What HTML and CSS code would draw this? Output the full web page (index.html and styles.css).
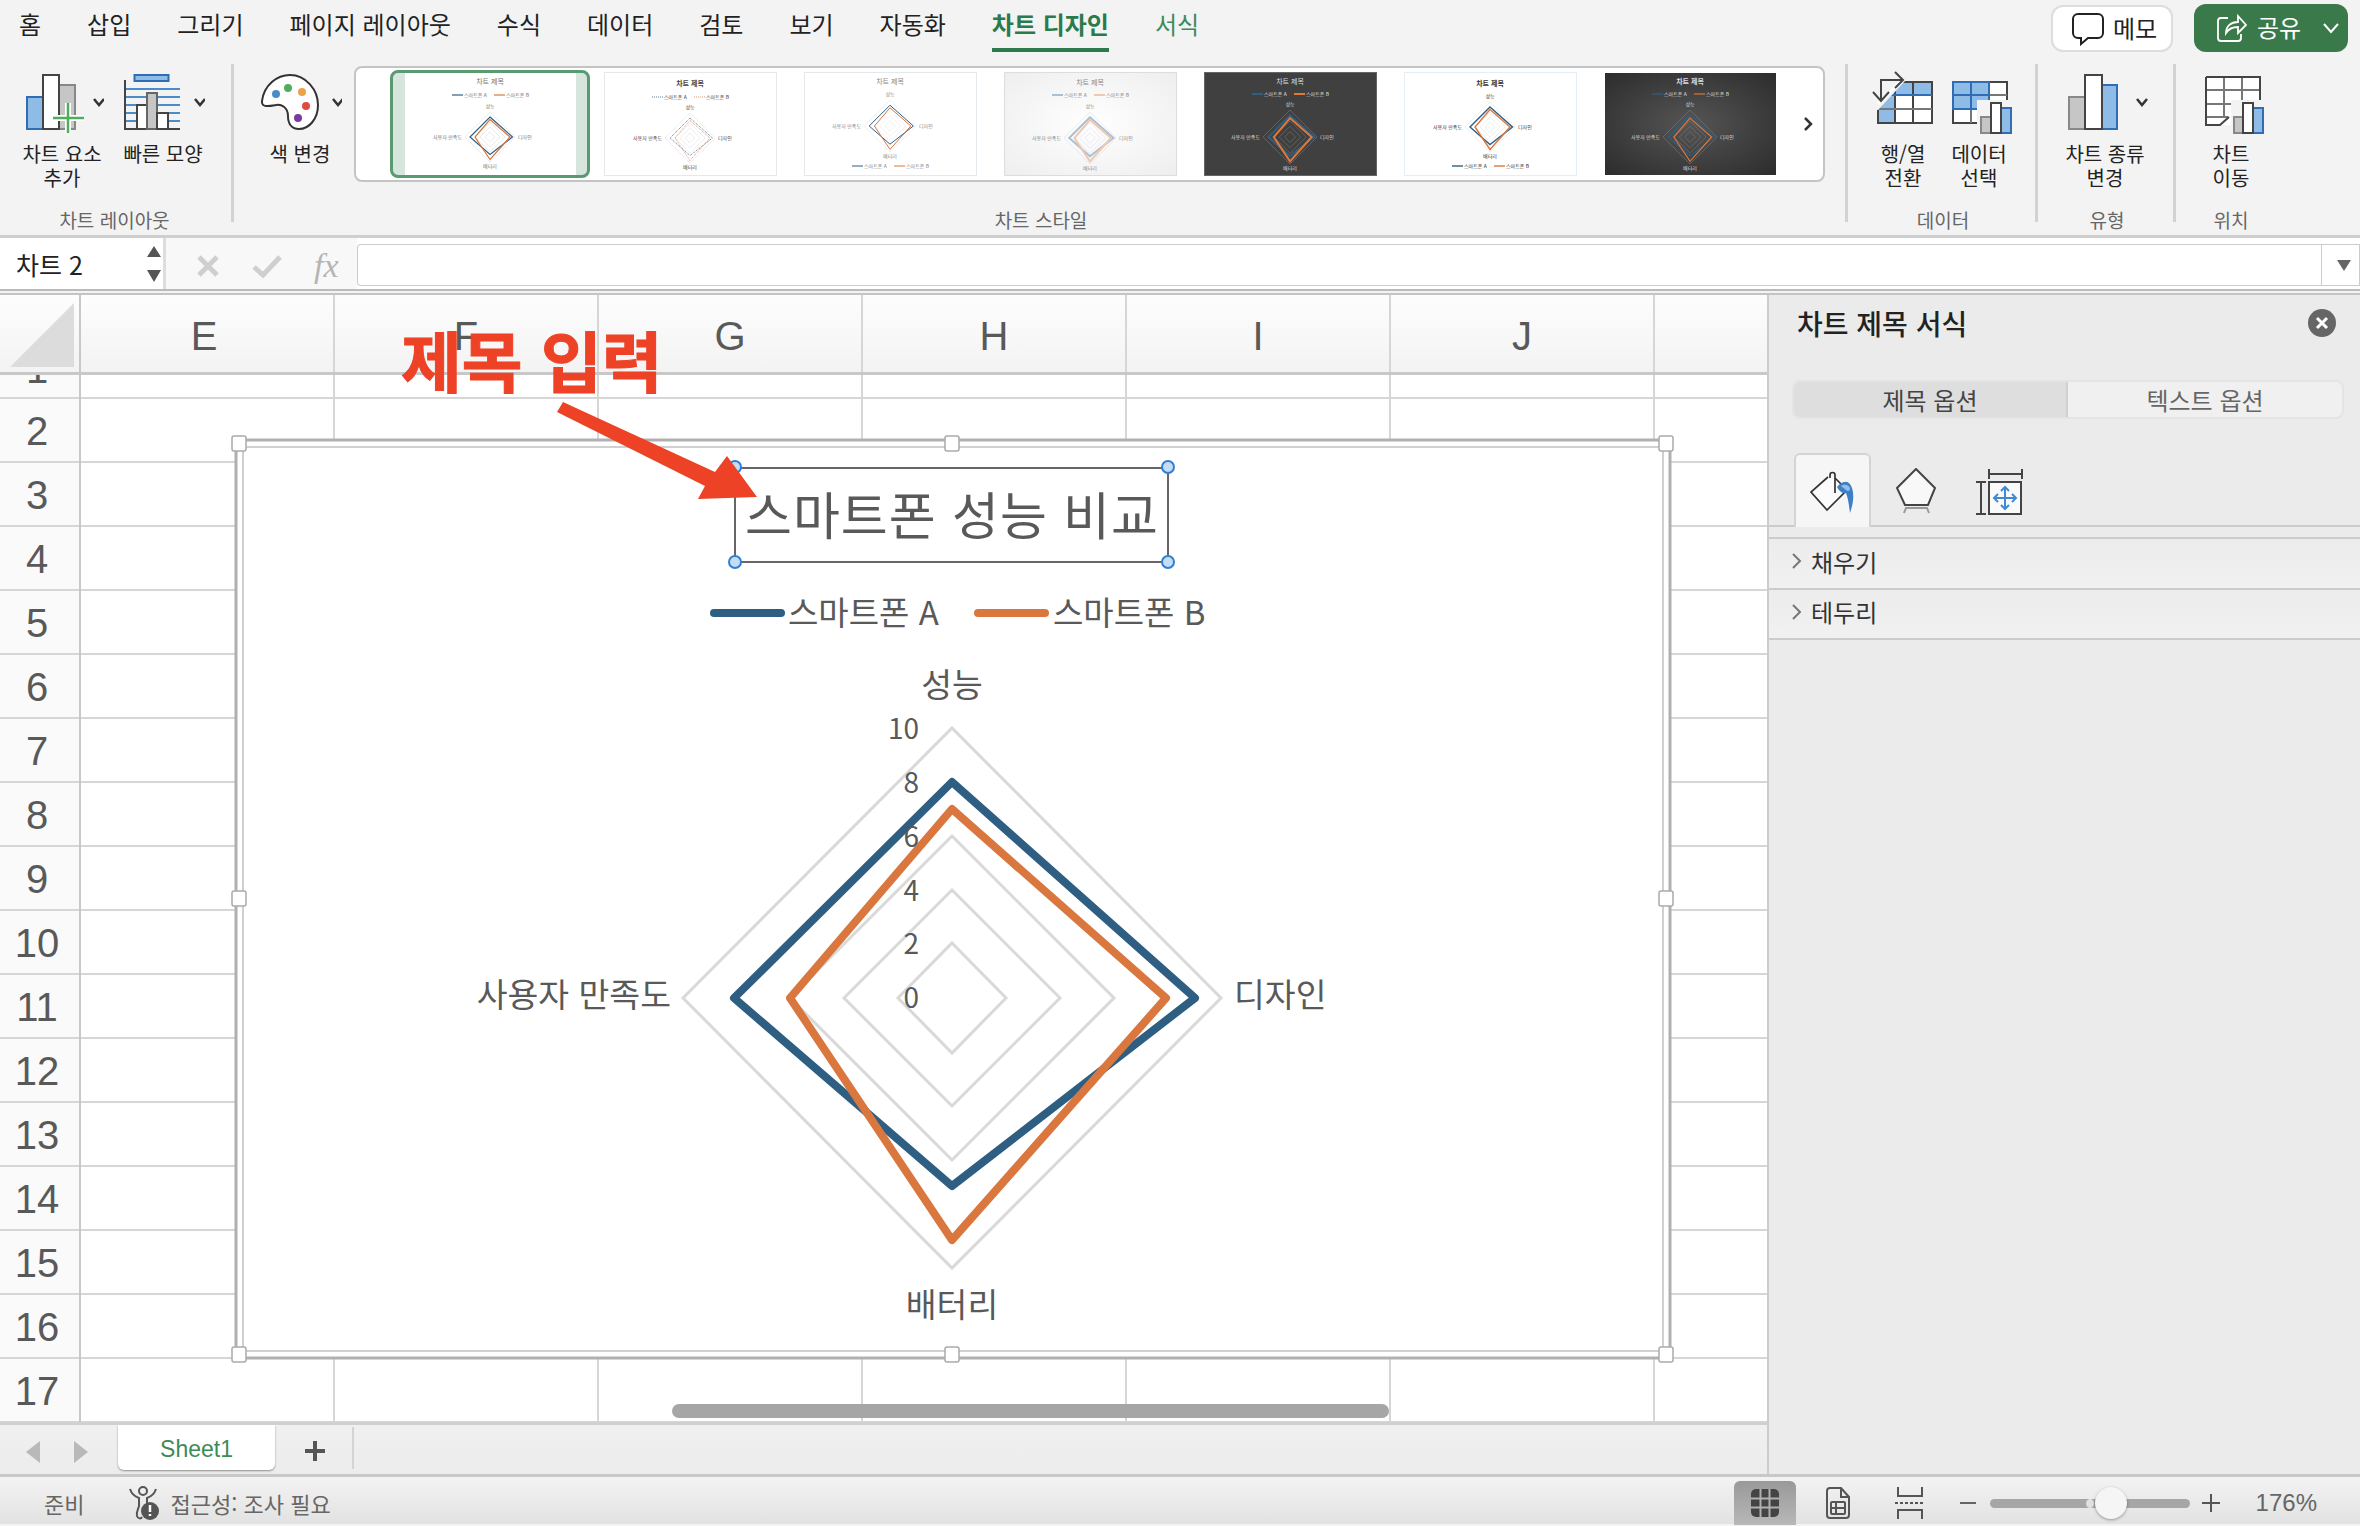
FILE: index.html
```html
<!DOCTYPE html>
<html lang="ko">
<head>
    <meta charset="UTF-8">
    <title>차트 디자인 - Excel</title>
    <link rel="stylesheet" href="styles.css">
</head>
<body>
    <!-- Tab bar -->
    <header class="tabbar">
        <ul class="tabs">
            <li>홈</li>
            <li>삽입</li>
            <li>그리기</li>
            <li>페이지 레이아웃</li>
            <li>수식</li>
            <li>데이터</li>
            <li>검토</li>
            <li>보기</li>
            <li>자동화</li>
            <li class="tab-active">차트 디자인</li>
            <li class="tab-green">서식</li>
        </ul>
        <div class="top-actions">
            <button class="memo-btn">
                <svg width="34" height="34" viewBox="0 0 34 34"><path d="M7 2h20a5 5 0 0 1 5 5v14a5 5 0 0 1-5 5H17l-7 6v-6H7a5 5 0 0 1-5-5V7a5 5 0 0 1 5-5z" fill="none" stroke="#222" stroke-width="2"/></svg>
                <span class="btn-text">메모</span>
            </button>
            <button class="share-btn">
                <svg width="32" height="32" viewBox="0 0 32 32" fill="none" stroke="#fff" stroke-width="1.8"><path d="M13 6H6a3 3 0 0 0-3 3v17a3 3 0 0 0 3 3h17a3 3 0 0 0 3-3v-4"/><path d="M11 21c0-7 5-11 12-11V4l8 9-8 8v-6c-5 0-9 1-12 6z"/></svg>
                <span class="btn-text">공유</span>
                <svg class="share-chev" width="18" height="12" viewBox="0 0 18 12" fill="none" stroke="#fff" stroke-width="2"><path d="M2 2l7 8 7-8"/></svg>
            </button>
        </div>
    </header>

    <!-- Ribbon -->
    <section class="ribbon">
        <div class="group group-layout">
            <div class="group-items">
                <div class="rb rb-84">
                    <svg width="84" height="68" viewBox="20 68 84 68">
                        <rect x="27" y="97" width="16" height="32" fill="#8fbce6" stroke="#2f6db5" stroke-width="2"/>
                        <rect x="59" y="85" width="16" height="44" fill="#c6c6c6" stroke="#888" stroke-width="2"/>
                        <rect x="43" y="75" width="16" height="54" fill="#fff" stroke="#444" stroke-width="2"/>
                        <path d="M53 118h31M68 103v30" stroke="#fff" stroke-width="6"/>
                        <path d="M53 118h31M68 103v30" stroke="#4fae5e" stroke-width="2.5"/>
                        <path class="chev" d="M95 99l5 6 5-6" transform="translate(-1 0)"/>
                    </svg>
                    <span>차트 요소<br>추가</span>
                </div>
                <div class="rb rb-84">
                    <svg width="84" height="68" viewBox="121 68 84 68">
                        <path d="M125 89h55M125 97h55M125 105h55M125 113h55M125 121h55" stroke="#4a8cc9" stroke-width="2"/>
                        <rect x="134.500" y="75" width="34" height="6" fill="#8fbce6" stroke="#2f6db5" stroke-width="2"/>
                        <path d="M125 80v49h55" fill="none" stroke="#444" stroke-width="2"/>
                        <rect x="137" y="105" width="10" height="24" fill="#fff" stroke="#444" stroke-width="2"/>
                        <rect x="147" y="93" width="10" height="36" fill="#c6c6c6" stroke="#666" stroke-width="2"/>
                        <rect x="157" y="113" width="11" height="16" fill="#fff" stroke="#444" stroke-width="2"/>
                        <path class="chev" d="M195 99l5 6 5-6"/>
                    </svg>
                    <span>빠른 모양</span>
                </div>
            </div>
            <div class="group-label">차트 레이아웃</div>
        </div>

        <div class="group group-style">
            <div class="group-items">
                <div class="rb rb-84">
                    <svg width="84" height="68" viewBox="258 68 84 68">
                        <path d="M262 101C264 85 277 75 290 75C306 75 318 90 318 105C318 119 309 129 299 129C291 129 288 123 288 116C288 107 281 104 276 105C270 106 261 108 262 101Z" fill="#fff" stroke="#333" stroke-width="2"/>
                        <circle cx="276" cy="94" r="4" fill="#4a8cc9"/>
                        <circle cx="288" cy="88" r="4" fill="#4fae5e"/>
                        <circle cx="302" cy="92" r="4" fill="#eea04a"/>
                        <circle cx="306" cy="106" r="4" fill="#e04b3f"/>
                        <circle cx="298" cy="118" r="4" fill="#7b3a9e"/>
                        <path class="chev" d="M333 99l5 6 5-6"/>
                    </svg>
                    <span>색 변경</span>
                </div>
                <div class="gallery">
                    <div class="thumbs" id="thumbs"></div>
                    <svg class="gallery-next" width="12" height="16" viewBox="0 0 12 16"><path d="M2 2l6 6-6 6" fill="none" stroke="#333" stroke-width="2.500"/></svg>
                </div>
            </div>
            <div class="group-label">차트 스타일</div>
        </div>

        <div class="group group-data">
            <div class="group-items">
                <div class="rb rb-76">
                    <svg width="76" height="68" viewBox="1865 68 76 68">
                        <rect x="1878" y="82" width="54" height="41" fill="#fff"/>
                        <path d="M1878 82h54v13h-54zM1878 95h17v28h-17z" fill="#8fbce6"/>
                        <path d="M1878 82h54v41h-54zM1895 82v41M1913 82v41" fill="none" stroke="#444" stroke-width="2"/>
                        <path d="M1878 95h54" stroke="#2f6db5" stroke-width="2"/>
                        <path d="M1878 109h54" stroke="#777" stroke-width="2"/>
                        <path d="M1870 68h36v12l-28 30h-8z" fill="#f3f3f3"/>
                        <path d="M1900 82l-22 22" stroke="#fff" stroke-width="3"/>
                        <path d="M1902 80h-21v20M1895 72l8 8-8 8M1873 92l8 9 8-9" fill="none" stroke="#444" stroke-width="2"/>
                    </svg>
                    <span>행/열<br>전환</span>
                </div>
                <div class="rb rb-76">
                    <svg width="76" height="68" viewBox="1941 68 76 68">
                        <rect x="1953" y="82" width="54" height="41" fill="#fff" stroke="#444" stroke-width="2"/>
                        <path d="M1953 82h36v28h-36z" fill="#8fbce6"/>
                        <path d="M1971 82v41M1989 82v41M1953 109h54M1953 95h54" stroke="#777" stroke-width="2"/>
                        <path d="M1953 82h36v27h-36zM1953 95h36M1971 82v27" fill="none" stroke="#2f6db5" stroke-width="2"/>
                        <rect x="1977" y="100" width="38" height="36" fill="#f3f3f3"/>
                        <rect x="1981" y="117" width="10" height="16" fill="#c6c6c6" stroke="#888" stroke-width="2"/>
                        <rect x="2001" y="108" width="10" height="25" fill="#8fbce6" stroke="#2f6db5" stroke-width="2"/>
                        <rect x="1991" y="103" width="10" height="30" fill="#fff" stroke="#444" stroke-width="2"/>
                    </svg>
                    <span>데이터<br>선택</span>
                </div>
            </div>
            <div class="group-label">데이터</div>
        </div>

        <div class="group group-type">
            <div class="group-items">
                <div class="rb rb-100">
                    <svg width="100" height="68" viewBox="2055 68 100 68">
                        <rect x="2069" y="97" width="16" height="32" fill="#c6c6c6" stroke="#888" stroke-width="2"/>
                        <rect x="2102" y="85" width="15" height="44" fill="#8fbce6" stroke="#2f6db5" stroke-width="2"/>
                        <rect x="2085" y="75" width="17" height="54" fill="#fff" stroke="#444" stroke-width="2"/>
                        <path class="chev" d="M2137 99l5 6 5-6"/>
                    </svg>
                    <span>차트 종류<br>변경</span>
                </div>
            </div>
            <div class="group-label">유형</div>
        </div>

        <div class="group group-place">
            <div class="group-items">
                <div class="rb rb-110">
                    <svg width="110" height="68" viewBox="2176 68 110 68">
                        <path d="M2206 77h54v48h-32l-8 0h-14z" fill="#fff"/>
                        <path d="M2206 90h54M2206 104h54M2206 117h22M2224 77v40M2242 77v40" stroke="#777" stroke-width="2" fill="none"/>
                        <path d="M2206 77h54v38M2206 77v48h14l9-8" fill="none" stroke="#444" stroke-width="2"/>
                        <rect x="2231" y="100" width="36" height="36" fill="#f3f3f3"/>
                        <rect x="2234" y="117" width="9" height="16" fill="#c6c6c6" stroke="#888" stroke-width="2"/>
                        <rect x="2253" y="108" width="10" height="25" fill="#8fbce6" stroke="#2f6db5" stroke-width="2"/>
                        <rect x="2243" y="103" width="10" height="30" fill="#fff" stroke="#444" stroke-width="2"/>
                    </svg>
                    <span>차트<br>이동</span>
                </div>
            </div>
            <div class="group-label">위치</div>
        </div>
    </section>

    <!-- Formula bar -->
    <section class="formula-bar">
        <div class="name-box">
            <span>차트 2</span>
            <svg width="16" height="36" viewBox="0 0 16 36"><path d="M8 0l7 11H1zM8 36l7-12H1z" fill="#555"/></svg>
        </div>
        <div class="formula-tools">
            <svg width="24" height="24" viewBox="0 0 24 24"><path d="M3 3l18 18M21 3L3 21" stroke="#cfcfcf" stroke-width="5"/></svg>
            <svg width="30" height="24" viewBox="0 0 30 24"><path d="M2 13l9 8L28 3" fill="none" stroke="#cfcfcf" stroke-width="5"/></svg>
            <span class="fx">fx</span>
        </div>
        <div class="formula-input"></div>
        <div class="formula-drop"><svg width="14" height="11" viewBox="0 0 14 11"><path d="M0 0h14L7 11z" fill="#666"/></svg></div>
    </section>

    <main class="workspace">
        <div class="sheet">
            <div class="col-head">
                <div class="corner"><svg width="64" height="64" viewBox="0 0 64 64"><path d="M0 64L64 0v64z" fill="#dcdcdc"/></svg></div>
                <div class="col col-e">E</div>
                <div class="col">F</div>
                <div class="col">G</div>
                <div class="col">H</div>
                <div class="col">I</div>
                <div class="col">J</div>
                <div class="col col-k"></div>
            </div>
            <div class="sheet-body">
                <div class="row-head">
                    <div class="row-first">1</div>
                    <div>2</div><div>3</div><div>4</div><div>5</div><div>6</div><div>7</div><div>8</div><div>9</div>
                    <div>10</div><div>11</div><div>12</div><div>13</div><div>14</div><div>15</div><div>16</div><div>17</div>
                </div>
                <div class="cells"></div>

                <!-- Chart object, coordinates follow the sheet pixels -->
                <svg class="chart" width="1450" height="934" viewBox="228 433 1450 934">
                    <rect x="236" y="440" width="1434" height="918" fill="#fff" stroke="#b0b0b0" stroke-width="3"/>
                    <rect x="243" y="447" width="1420" height="904" fill="#fff" stroke="#d0d0d0" stroke-width="2"/>

                    <g class="handles">
                        <rect x="232" y="436" width="14" height="15" rx="2"/>
                        <rect x="945" y="436" width="14" height="15" rx="2"/>
                        <rect x="1659" y="436" width="14" height="15" rx="2"/>
                        <rect x="232" y="891" width="14" height="15" rx="2"/>
                        <rect x="1659" y="891" width="14" height="15" rx="2"/>
                        <rect x="232" y="1347" width="14" height="15" rx="2"/>
                        <rect x="945" y="1347" width="14" height="15" rx="2"/>
                        <rect x="1659" y="1347" width="14" height="15" rx="2"/>
                    </g>

                    <rect x="735" y="468" width="433" height="94" fill="#fff" stroke="#666" stroke-width="2"/>
                    <text class="chart-title" x="952" y="535">스마트폰 성능 비교</text>
                    <g class="title-handles">
                        <circle cx="735" cy="467" r="6"/>
                        <circle cx="1168" cy="467" r="6"/>
                        <circle cx="735" cy="562" r="6"/>
                        <circle cx="1168" cy="562" r="6"/>
                    </g>

                    <path d="M714 613h67" stroke="#2e5f83" stroke-width="8" stroke-linecap="round"/>
                    <text class="legend" x="788" y="625">스마트폰 A</text>
                    <path d="M978 613h67" stroke="#d9773f" stroke-width="8" stroke-linecap="round"/>
                    <text class="legend" x="1053" y="625">스마트폰 B</text>

                    <g class="rings">
                        <path d="M952 943l54 55-54 55-54-55z"/>
                        <path d="M952 890l108 108-108 108-108-108z"/>
                        <path d="M952 836l162 162-162 162-162-162z"/>
                        <path d="M952 728l269 270-269 270-269-270z"/>
                    </g>
                    <path class="series" d="M952 782L1195 998L952 1186L734 998Z" stroke="#2e5f83"/>
                    <path class="series" d="M952 809L1166 998L952 1240L790 998Z" stroke="#d9773f"/>

                    <g class="scale">
                        <text x="919" y="739">10</text>
                        <text x="919" y="793">8</text>
                        <text x="919" y="847">6</text>
                        <text x="919" y="901">4</text>
                        <text x="919" y="954">2</text>
                        <text x="919" y="1008">0</text>
                    </g>
                    <g class="axis">
                        <text x="952" y="697" text-anchor="middle">성능</text>
                        <text x="1234" y="1007">디자인</text>
                        <text x="671" y="1007" text-anchor="end">사용자 만족도</text>
                        <text x="952" y="1317" text-anchor="middle">배터리</text>
                    </g>
                </svg>

                <div class="h-scroll"></div>
            </div>

            <!-- Annotation pasted over the sheet -->
            <svg class="note" width="400" height="210" viewBox="390 310 400 210">
                <text x="401" y="387">제목 입력</text>
                <path d="M563 402L557 412L705 486L698 499L757 497L727 456L715 472Z" fill="#ee4227"/>
            </svg>

            <div class="sheet-tabs">
                <svg class="sheet-arrows" width="62" height="22" viewBox="0 0 62 22"><path d="M14 0v22L0 11zM48 0v22l14-11z" fill="#b9b9b9"/></svg>
                <div class="sheet-tab">Sheet1</div>
                <svg class="sheet-add" width="22" height="22" viewBox="0 0 22 22"><path d="M11 1v20M1 11h20" stroke="#555" stroke-width="4"/></svg>
                <div class="sheet-sep"></div>
            </div>
        </div>

        <!-- Format pane -->
        <aside class="pane">
            <div class="pane-head">
                <h2>차트 제목 서식</h2>
                <svg width="28" height="28" viewBox="0 0 28 28"><circle cx="14" cy="14" r="14" fill="#666"/><path d="M9 9l10 10M19 9L9 19" stroke="#fff" stroke-width="3"/></svg>
            </div>
            <div class="segments">
                <div class="seg seg-on">제목 옵션</div>
                <div class="seg">텍스트 옵션</div>
            </div>
            <div class="pane-icons">
                <div class="icon-tab icon-tab-on">
                    <svg width="48" height="46" viewBox="1810 470 48 46">
                        <path d="M1829 477L1812 492L1828 510L1848 490L1836 478" fill="#fbfbfb" stroke="#333" stroke-width="1.700"/>
                        <path d="M1831 478V475a2.500 2.500 0 0 1 5 0V493" fill="none" stroke="#333" stroke-width="1.700"/>
                        <path d="M1838 487C1841 483 1846 480 1850 483C1856 489 1855 502 1851 513C1850 505 1849 498 1847 493C1844 494 1840 491 1838 487Z" fill="#3f7fc7"/>
                        <path d="M1842 486C1845 484 1849 484 1851 488C1851 491 1849 492 1847 490Z" fill="#93bfe8"/>
                    </svg>
                </div>
                <div class="icon-tab icon-tab-wide">
                    <svg width="44" height="46" viewBox="1894 470 44 46">
                        <path d="M1916 471L1935 490L1928 507H1905L1897 490Z" fill="#f8f8f8" stroke="#444" stroke-width="2"/>
                        <path d="M1904 515L1906 510H1927L1929 515" fill="none" stroke="#999" stroke-width="2"/>
                    </svg>
                </div>
                <div class="icon-tab">
                    <svg width="50" height="48" viewBox="1975 467 50 48">
                        <rect x="1989" y="481" width="32" height="32" fill="#fafafa" stroke="#444" stroke-width="2"/>
                        <path d="M1989 468v10M1989 473h33M2022 468v10M1976 481h10M1981 481v32M1976 513h10" fill="none" stroke="#444" stroke-width="2"/>
                        <path d="M2005 486v22M1994 497h22M2001 490l4-4 4 4M2001 504l4 4 4-4M1998 493l-4 4 4 4M2012 493l4 4-4 4" fill="none" stroke="#3f8ad0" stroke-width="2"/>
                    </svg>
                </div>
            </div>
            <div class="pane-sections">
                <div class="section">
                    <svg width="12" height="18" viewBox="0 0 12 18"><path d="M2 2l7 7-7 7" fill="none" stroke="#777" stroke-width="2"/></svg>
                    채우기
                </div>
                <div class="section">
                    <svg width="12" height="18" viewBox="0 0 12 18"><path d="M2 2l7 7-7 7" fill="none" stroke="#777" stroke-width="2"/></svg>
                    테두리
                </div>
            </div>
        </aside>
    </main>

    <!-- Status bar -->
    <footer class="statusbar">
        <span class="status-ready">준비</span>
        <svg class="status-a11y" width="32" height="36" viewBox="0 0 32 36" fill="none" stroke="#555" stroke-width="2">
            <circle cx="15" cy="6" r="4"/>
            <path d="M2 4c2 6 6 8 9 9v8c-1 4-3 6-2 10 1 3 4 3 5 1M28 4c-2 6-6 8-9 9v7"/>
            <circle cx="22" cy="26" r="9" fill="#555" stroke="none"/>
            <path d="M22 20v7M22 29v2" stroke="#fff" stroke-width="2.500"/>
        </svg>
        <span class="status-text">접근성: 조사 필요</span>
        <div class="status-right">
            <div class="view-btn">
                <svg width="28" height="28" viewBox="0 0 28 28"><rect width="28" height="28" rx="5" fill="#444"/><path d="M9.500 0v28M18.500 0v28M0 9.500h28M0 18.500h28" stroke="#b0b0b0" stroke-width="2"/></svg>
            </div>
            <svg class="view-page" width="24" height="32" viewBox="0 0 24 32" fill="none" stroke="#555" stroke-width="2"><path d="M4 1h11l8 9v18a3 3 0 0 1-3 3H4a3 3 0 0 1-3-3V4a3 3 0 0 1 3-3zM15 1v9h8"/><rect x="5" y="15" width="14" height="12" rx="1"/><path d="M5 21h14M10 15v12"/></svg>
            <svg class="view-break" width="30" height="32" viewBox="0 0 30 32" fill="none" stroke="#555" stroke-width="2"><path d="M3 0v9h24V0M3 32v-9h24v9"/><path d="M0 16h30" stroke-dasharray="3 2"/></svg>
            <div class="zoom-minus"></div>
            <div class="zoom-track"><span class="zoom-dot"></span><span class="zoom-thumb"></span></div>
            <svg class="zoom-plus" width="18" height="18" viewBox="0 0 18 18"><path d="M9 0v18M0 9h18" stroke="#555" stroke-width="2"/></svg>
            <span class="zoom-val">176%</span>
        </div>
    </footer>

    <script src="script.js"></script>
</body>
</html>
```

FILE: styles.css
```css
/* General Styling */
* {
    box-sizing: border-box;
}

html, body {
    margin: 0;
    padding: 0;
}

body {
    width: 2360px;
    height: 1526px;
    overflow: hidden;
    background: #f3f3f3;
    color: #222;
    font-family: "Noto Sans CJK KR", "Noto Sans", sans-serif;
    font-size: 24px;
}

svg {
    display: block;
    flex: none;
}

/* Tab bar */
.tabbar {
    display: flex;
    justify-content: space-between;
    height: 55px;
}

.tabs {
    display: flex;
    gap: 46px;
    list-style: none;
    margin: 0;
    padding: 4px 0 0 19px;
    line-height: 40px;
    white-space: nowrap;
}

.tabs li {
    position: relative;
    height: 48px;
}

.tab-active {
    color: #2b7a4b;
    font-weight: bold;
    border-bottom: 4px solid #2f7a4c;
}

.tab-green {
    color: #3e8a59;
}

.top-actions {
    display: flex;
    gap: 21px;
    padding: 4px 12px 0 0;
}

.memo-btn,
.share-btn {
    display: flex;
    align-items: center;
    font-family: inherit;
    font-size: 24px;
    border-radius: 12px;
    padding: 0;
}

.btn-text {
    margin-top: -3px;
}

.memo-btn {
    width: 122px;
    height: 47px;
    margin-top: 1px;
    gap: 8px;
    padding-left: 18px;
    background: #fff;
    border: 2px solid #ddd;
    color: #222;
}

.share-btn {
    width: 154px;
    height: 48px;
    gap: 10px;
    padding-left: 21px;
    background: #3a7a4a;
    border: none;
    color: #fff;
}

.share-chev {
    margin-left: 11px;
}

/* Ribbon */
.ribbon {
    display: flex;
    height: 183px;
    padding-top: 9px;
    border-bottom: 3px solid #cfcfcf;
}

.group {
    position: relative;
    display: flex;
    flex-direction: column;
    height: 168px;
}

.group::after {
    content: "";
    position: absolute;
    top: 0;
    right: 0;
    width: 3px;
    height: 158px;
    background: #d2d2d2;
}

.group-items {
    display: flex;
    height: 144px;
    padding-top: 4px;
}

.group-label {
    text-align: center;
    font-size: 19px;
    line-height: 24px;
    color: #666;
}

.group-layout {
    width: 234px;
}

.group-layout .group-items {
    padding-left: 20px;
    gap: 17px;
}

.group-layout .group-label {
    padding-right: 5px;
}

.group-style {
    width: 1614px;
}

.group-style .group-items {
    padding-left: 24px;
}

.group-data {
    width: 190px;
}

.group-data .group-items {
    padding-left: 17px;
}

.group-type {
    width: 138px;
}

.group-type .group-items {
    padding-left: 17px;
}

.group-place {
    width: 110px;
}

.group-place::after {
    display: none;
}

.rb {
    text-align: center;
    font-size: 20px;
    line-height: 24px;
}

.rb span {
    display: block;
    margin-top: 6px;
    white-space: nowrap;
}

.rb-84 { width: 84px; }
.rb-76 { width: 76px; }
.rb-100 { width: 100px; }
.rb-110 { width: 110px; }

.chev {
    fill: none;
    stroke: #333;
    stroke-width: 2.5;
}

/* Chart style gallery */
.gallery {
    display: flex;
    align-items: center;
    width: 1471px;
    height: 116px;
    margin: -2px 0 0 12px;
    padding-left: 34px;
    background: #fff;
    border: 2px solid #c4c4c4;
    border-radius: 8px;
}

.thumbs {
    display: flex;
}

.thumb {
    display: flex;
    justify-content: center;
    align-items: center;
    width: 200px;
    height: 108px;
    border: 3px solid transparent;
    border-radius: 8px;
}

.thumb-on {
    background: #d7e6dc;
    border-color: #5a9a70;
}

.thumb svg text {
    font-size: 5px;
    fill: currentColor;
}

.thumb svg .t-title {
    font-size: 7px;
}

.gallery-next {
    margin-left: 13px;
}

/* Formula bar */
.formula-bar {
    display: flex;
    height: 53px;
    background: #fff;
    border-bottom: 2px solid #bbb;
}

.name-box {
    display: flex;
    align-items: center;
    justify-content: space-between;
    width: 166px;
    padding: 0 1px 0 16px;
    font-size: 25px;
    border-right: 3px solid #ddd;
}

.formula-tools {
    display: flex;
    align-items: center;
    width: 191px;
    padding: 4px 0 0 30px;
    gap: 32px;
    background: #f8f8f8;
}

.fx {
    margin-left: 0;
    font-family: "Liberation Serif", serif;
    font-style: italic;
    font-size: 34px;
    color: #b5b5b5;
}

.formula-input {
    flex: 1;
    margin: 6px 0 3px;
    background: #fff;
    border: 1px solid #ccc;
    border-right: none;
    border-radius: 4px 0 0 4px;
}

.formula-drop {
    display: flex;
    align-items: center;
    justify-content: center;
    width: 39px;
    margin: 6px 0 3px;
    padding-left: 6px;
    background: #fff;
    border: 1px solid #ccc;
}

/* Worksheet */
.workspace {
    display: flex;
    height: 1181px;
    border-top: 2px solid #c4c4c4;
    margin-top: 2px;
}

.sheet {
    position: relative;
    display: flex;
    flex-direction: column;
    width: 1767px;
    background: #fff;
}

.col-head {
    display: flex;
    height: 80px;
    background: linear-gradient(#fdfdfd, #f3f3f3);
    border-bottom: 3px solid #c8c8c8;
}

.corner {
    display: flex;
    align-items: flex-end;
    justify-content: flex-end;
    width: 81px;
    padding: 0 5px 5px 0;
    border-right: 2px solid #c8c8c8;
}

.col {
    width: 264px;
    text-align: center;
    font-family: "Liberation Sans", sans-serif;
    font-size: 40px;
    line-height: 82px;
    color: #595959;
    border-right: 2px solid #d6d6d6;
}

.col-e {
    width: 254px;
    padding-right: 6px;
}

.col-k {
    flex: 1;
    border-right: none;
}

.sheet-body {
    position: relative;
    display: flex;
    flex: none;
    height: 1050px;
    overflow: hidden;
    border-bottom: 3px solid #d0d0d0;
}

.row-head {
    width: 81px;
    background: #fafafa;
    border-right: 2px solid #c8c8c8;
    font-family: "Liberation Sans", sans-serif;
    font-size: 40px;
    color: #595959;
    text-align: center;
}

.row-head div {
    height: 64px;
    line-height: 64px;
    padding-right: 5px;
    white-space: nowrap;
    border-bottom: 2px solid #d6d6d6;
}

.row-head .row-first {
    display: flex;
    justify-content: center;
    align-items: flex-end;
    height: 24px;
    line-height: 56px;
    overflow: hidden;
}

.cells {
    flex: 1;
    background-color: #fff;
    background-image:
        linear-gradient(to right, transparent 262px, #d6d6d6 262px),
        linear-gradient(to bottom, transparent 62px, #d6d6d6 62px);
    background-size: 264px 100%, 100% 64px;
    background-position: -10px 0, 0 24px;
}

.chart {
    position: absolute;
    left: 228px;
    top: 58px;
}

.handles rect {
    fill: #fff;
    stroke: #aaa;
    stroke-width: 1.5;
}

.chart-title {
    font-size: 51px;
    letter-spacing: 1px;
    fill: #595959;
    text-anchor: middle;
}

.title-handles circle {
    fill: #c5dcf5;
    stroke: #2f7ed8;
    stroke-width: 2;
}

.legend {
    font-size: 33px;
    fill: #595959;
}

.rings path {
    fill: none;
    stroke: #d9d9d9;
    stroke-width: 3;
}

.series {
    fill: none;
    stroke-width: 8;
    stroke-linejoin: round;
}

.scale text {
    font-size: 28px;
    fill: #595959;
    text-anchor: end;
}

.axis text {
    font-size: 33.5px;
    fill: #595959;
}

.h-scroll {
    position: absolute;
    left: 672px;
    bottom: 4px;
    width: 717px;
    height: 14px;
    background: #a6a6a6;
    border-radius: 7px;
}

.note {
    position: absolute;
    left: 390px;
    top: 15px;
}

.note text {
    font-size: 66px;
    font-weight: bold;
    fill: #ee4227;
    stroke: #ee4227;
    stroke-width: 1;
}

/* Sheet tabs */
.sheet-tabs {
    display: flex;
    flex: none;
    align-items: flex-start;
    height: 49px;
    background: linear-gradient(#f0f0f0, #ececec);
}

.sheet-arrows {
    margin: 16px 0 0 26px;
}

.sheet-tab {
    width: 157px;
    height: 45px;
    margin-left: 30px;
    text-align: center;
    font-family: "Liberation Sans", sans-serif;
    font-size: 23px;
    line-height: 48px;
    color: #3e8a59;
    background: #fff;
    border-radius: 0 0 6px 6px;
    box-shadow: 0 1px 2px rgba(0, 0, 0, 0.4);
}

.sheet-add {
    margin: 15px 0 0 29px;
}

.sheet-sep {
    width: 2px;
    height: 42px;
    margin: 2px 0 0 26px;
    background: #d4d4d4;
}

/* Format pane */
.pane {
    flex: 1;
    background: #ebebeb;
    border-left: 2px solid #ccc;
}

.pane-head {
    display: flex;
    justify-content: space-between;
    align-items: center;
    height: 56px;
    padding: 0 24px 0 28px;
}

.pane-head h2 {
    margin: 0;
    font-size: 28px;
    font-weight: 500;
    color: #222;
}

.segments {
    display: flex;
    width: 552px;
    height: 39px;
    margin: 29px 0 0 23px;
    font-size: 24px;
    line-height: 35px;
    text-align: center;
    color: #666;
    background: #f0f0f0;
    border: 2px solid #e4e4e4;
    border-radius: 8px;
    overflow: hidden;
}

.seg {
    flex: 1;
}

.seg-on {
    flex: none;
    width: 274px;
    color: #444;
    background: #dedede;
    border-right: 2px solid #d0d0d0;
}

.pane-icons {
    display: flex;
    height: 74px;
    margin-top: 34px;
    padding-left: 25px;
    border-bottom: 2px solid #ccc;
}

.icon-tab {
    display: flex;
    justify-content: center;
    width: 77px;
    height: 74px;
    padding-top: 15px;
    margin-right: 5px;
}

.icon-tab-wide {
    width: 80px;
}

.icon-tab-on {
    background: #f6f6f6;
    border: 2px solid #d4d4d4;
    border-bottom: none;
    border-radius: 6px 6px 0 0;
}

.pane-sections {
    margin-top: 10px;
    border-top: 2px solid #ccc;
}

.section {
    display: flex;
    align-items: center;
    gap: 8px;
    height: 50.5px;
    padding: 0 0 4px 22px;
    color: #333;
    background: linear-gradient(#ececec, #f1f1f1);
    border-bottom: 2px solid #ccc;
}

/* Status bar */
.statusbar {
    display: flex;
    align-items: center;
    height: 50px;
    padding: 5px 0 0 44px;
    font-size: 22px;
    color: #666;
    background: linear-gradient(#f3f3f3, #e2e2e2);
    border-top: 3px solid #c8c8c8;
}

.status-a11y {
    margin-left: 44px;
}

.status-text {
    margin-left: 10px;
}

.status-right {
    display: flex;
    align-items: center;
    margin-left: auto;
    height: 100%;
    padding-right: 43px;
}

.view-btn {
    display: flex;
    align-items: center;
    justify-content: center;
    width: 62px;
    height: 44px;
    background: linear-gradient(#999, #b8b8b8);
    border-radius: 6px 6px 0 0;
}

.view-page {
    margin-left: 30px;
}

.view-break {
    margin-left: 45px;
}

.zoom-minus {
    width: 16px;
    height: 2px;
    margin-left: 35px;
    background: #666;
}

.zoom-track {
    position: relative;
    width: 200px;
    height: 9px;
    margin-left: 14px;
    background: #a6a6a6;
    border-radius: 5px;
}

.zoom-dot {
    position: absolute;
    left: 96px;
    top: 0;
    width: 8px;
    height: 9px;
    background: #e0e0e0;
    border-radius: 50%;
}

.zoom-thumb {
    position: absolute;
    left: 105px;
    top: -12px;
    width: 32px;
    height: 32px;
    background: #f5f5f5;
    border-radius: 50%;
    box-shadow: 0 1px 3px rgba(0, 0, 0, 0.35);
}

.zoom-plus {
    margin-left: 12px;
}

.zoom-val {
    margin-left: 36px;
    font-family: "Liberation Sans", sans-serif;
    font-size: 24px;
    color: #666;
}
```

FILE: script.js
```js
// Small previews in the chart style gallery
const styles = [
    { cy: 64, r: 25, titleY: 11, legendY: 24, bg: "#fff", text: "#777", ring: "#ddd", a: "#2e5f83", b: "#d9773f", w: 1.2 },
    { cy: 65, r: 25, titleY: 13, legendY: 26, bg: "#fff", text: "#444", ring: "#e4e4e4", a: "#5b7f9e", b: "#e09a70", w: 1, bold: true, border: "#e4e9ee", dash: "1 1" },
    { cy: 53, r: 26, titleY: 11, legendY: 95, bg: "#fff", text: "#888", ring: "#e8e8e8", a: "#2e5f83", b: "#d9773f", w: 1, border: "#e4e9ee" },
    { cy: 65, r: 26, titleY: 12, legendY: 24, bg: "radial-gradient(#fff, #eee)", text: "#888", ring: "#dde", a: "#a9c1d6", b: "#f0c8ae", w: 2, border: "#ddd" },
    { cy: 64, r: 27, titleY: 11, legendY: 23, bg: "#404040", text: "#ddd", ring: "#777", a: "#2e5f83", b: "#e0783a", w: 2, border: "#666" },
    { cy: 54, r: 25, titleY: 13, legendY: 95, bg: "#fff", text: "#333", ring: "#e4e4e4", a: "#2e5f83", b: "#d9773f", w: 1.4, bold: true, border: "#e4eef4" },
    { cy: 64, r: 27, titleY: 11, legendY: 23, bg: "radial-gradient(#555, #2c2c2c)", text: "#ddd", ring: "#777", a: "#2e5f83", b: "#d9773f", w: 1.2, bold: true }
];

const seriesA = [8, 9, 7, 8];
const seriesB = [7, 8, 9, 6];

function diamond(cx, cy, r, vals) {
    const k = r / 10;
    return `M${cx} ${cy - vals[0] * k}L${cx + vals[1] * k} ${cy}L${cx} ${cy + vals[2] * k}L${cx - vals[3] * k} ${cy}Z`;
}

function preview(s) {
    const cx = 85;
    const rings = [2, 4, 6, 10].map(v =>
        `<path d="${diamond(cx, s.cy, s.r, [v, v, v, v])}" fill="none" stroke="${s.ring}" stroke-width="0.6"/>`
    ).join("");
    const dash = s.dash ? `stroke-dasharray="${s.dash}"` : "";
    return `
        <svg width="171" height="102" viewBox="0 0 171 102" style="background:${s.bg};outline:1px solid ${s.border || "transparent"};color:${s.text}">
            <text class="t-title" x="${cx}" y="${s.titleY}" text-anchor="middle" font-weight="${s.bold ? "bold" : "normal"}">차트 제목</text>
            <path d="M${cx - 38} ${s.legendY - 2}h11" stroke="${s.a}" stroke-width="${s.w}" ${dash}/>
            <text x="${cx - 26}" y="${s.legendY}">스마트폰 A</text>
            <path d="M${cx + 4} ${s.legendY - 2}h11" stroke="${s.b}" stroke-width="${s.w}" ${dash}/>
            <text x="${cx + 16}" y="${s.legendY}">스마트폰 B</text>
            ${rings}
            <path d="${diamond(cx, s.cy, s.r, seriesA)}" fill="none" stroke="${s.a}" stroke-width="${s.w}" ${dash}/>
            <path d="${diamond(cx, s.cy, s.r, seriesB)}" fill="none" stroke="${s.b}" stroke-width="${s.w}" ${dash}/>
            <text x="${cx}" y="${s.cy - s.r - 4}" text-anchor="middle">성능</text>
            <text x="${cx + s.r + 3}" y="${s.cy + 2}">디자인</text>
            <text x="${cx - s.r - 3}" y="${s.cy + 2}" text-anchor="end">사용자 만족도</text>
            <text x="${cx}" y="${s.cy + s.r + 6}" text-anchor="middle">배터리</text>
        </svg>`;
}

document.getElementById("thumbs").innerHTML = styles.map((s, i) =>
    `<div class="thumb ${i === 0 ? "thumb-on" : ""}">${preview(s)}</div>`
).join("");
```
